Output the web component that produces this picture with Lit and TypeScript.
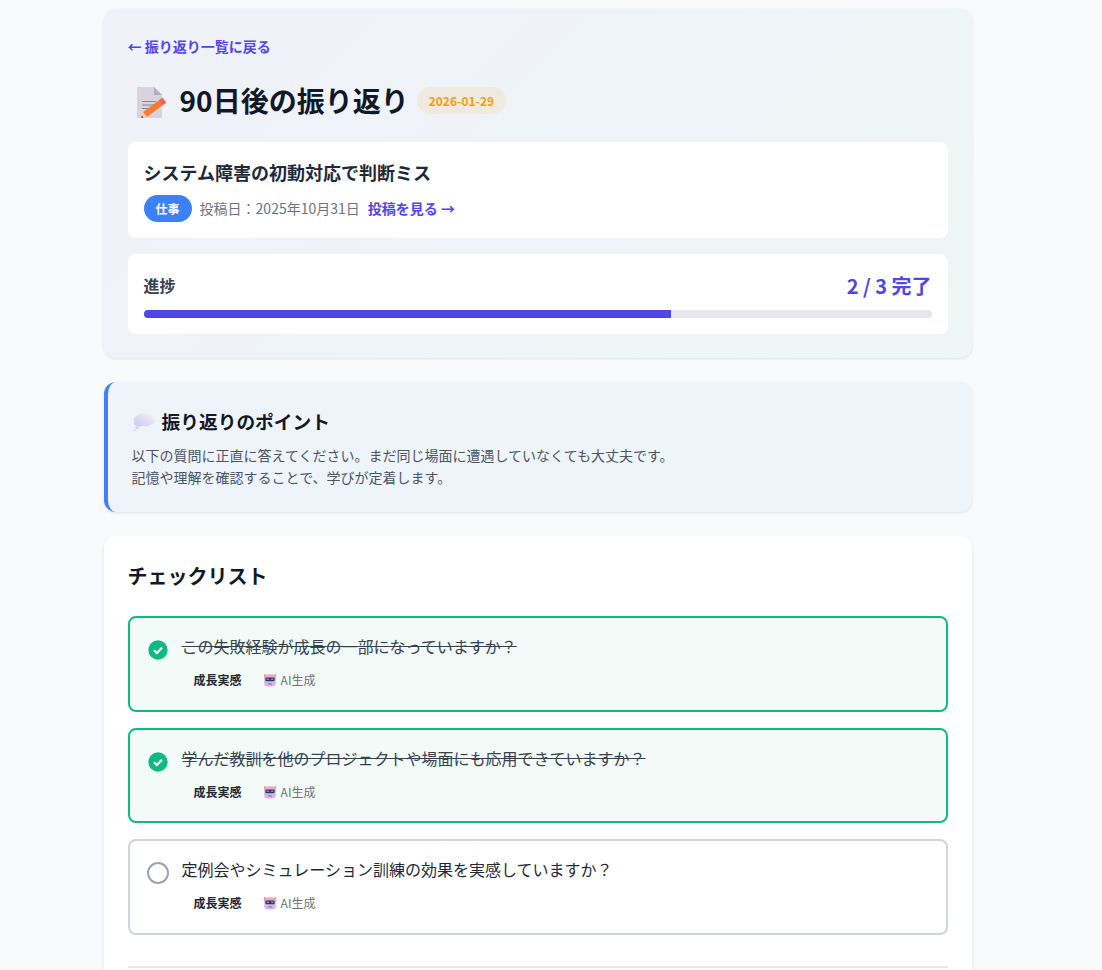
import { LitElement, html, css, svg } from "lit";
import { customElement } from "lit/decorators.js";

const items = [
  { text: "この失敗経験が成長の一部になっていますか？", done: true },
  { text: "学んだ教訓を他のプロジェクトや場面にも応用できていますか？", done: true },
  { text: "定例会やシミュレーション訓練の効果を実感していますか？", done: false },
];

const memo = svg`<svg class="memo" viewBox="0 0 32 32">
  <path d="M1 1H18L26 9V32H1Z" fill="#d9d2df"/>
  <path d="M18 1L26 9H18Z" fill="#b5aebf"/>
  <path d="M6 15.5H20M6 19H21M6 22.5H15" stroke="#8a8597" stroke-width="1.2"/>
  <path d="M9 28.5L24.5 17" stroke="#f97b2e" stroke-width="6.5"/>
  <path d="M24.5 17L28.4 14.1" stroke="#f4625c" stroke-width="6.5"/>
  <path d="M5.6 31.6L6.8 26L11 31.2Z" fill="#f6c9a0"/>
  <path d="M5 32L6 29.8L7.6 31.4Z" fill="#5b4a52"/>
</svg>`;

const cloud = svg`<svg class="cloud" viewBox="0 0 24 20">
  <defs><linearGradient id="c" x1="0" y1="1" x2="1" y2="0"><stop offset="0" stop-color="#cfc6ea"/><stop offset="1" stop-color="#f4f3fb"/></linearGradient></defs>
  <path d="M6.5 15C2.5 15 1 12 2.4 10C1 7 3.6 4.2 6.2 4.6C8 2 12 1.4 14.2 3.2C17.4 2 21 3.6 21 6.4C23.8 8 23 12.4 19.8 12.8C17.6 15.6 13.5 16 11.5 14.4C9.8 15.4 8.2 15.4 6.5 15Z" fill="url(#c)"/>
  <circle cx="5" cy="16.6" r="1.6" fill="#d8d0ee"/>
  <circle cx="2.8" cy="19" r="0.9" fill="#d8d0ee"/>
</svg>`;

const robot = svg`<svg class="robot" viewBox="0 0 14 14">
  <path d="M1 0.5L3.6 2.2H10.4L13 0.5V6H1Z" fill="#f290b8"/>
  <path d="M4 1H10V3H4Z" fill="#f8c3a8"/>
  <rect x="1.2" y="2.4" width="11.6" height="11" rx="3.4" fill="#d7b6e6"/>
  <path d="M1.2 6V4.6C1.2 3.2 2.6 2.4 4 2.4H10C11.4 2.4 12.8 3.2 12.8 4.6V6Z" fill="#f4a3c6"/>
  <rect x="2.4" y="4.4" width="9.2" height="3.8" rx="1.3" fill="#2b3a68"/>
  <rect x="3.8" y="5.6" width="2" height="1.3" fill="#63c0ee"/>
  <rect x="8.2" y="5.6" width="2" height="1.3" fill="#63c0ee"/>
  <rect x="5.2" y="10.2" width="3.6" height="1.3" rx="0.6" fill="#8a6fb0"/>
</svg>`;

@customElement("app-root")
export class AppRoot extends LitElement {
  static styles = css`
    :host {
      display: block;
      height: 970px;
      overflow: hidden;
      background: #f9fafb;
      font-family: "Noto Sans CJK JP", "Noto Sans", sans-serif;
      color: #111827;
    }
    .wrap { width: 868px; margin-left: 103.6px; padding-top: 9px; }
    .card {
      border-radius: 12px;
      box-shadow: 0 1px 3px rgba(0, 0, 0, 0.1);
      margin-bottom: 24px;
    }
    .head {
      padding: 24px;
      height: 349px;
      box-sizing: border-box;
      background: linear-gradient(135deg, rgba(79, 70, 229, 0.05) 0%, rgba(16, 185, 129, 0.05) 100%);
    }
    .back { display: block; font-size: 14px; font-weight: 700; line-height: 26px; color: #4f46e5; }
    .title { display: flex; align-items: center; gap: 8px; margin-top: 19px; height: 44px; }
    .icon-box { width: 44px; display: flex; justify-content: flex-end; padding: 4px 4px 0 0; box-sizing: border-box; }
    .memo { width: 32px; height: 32px; display: block; }
    h1 { margin: 0; font-size: 28px; line-height: 44px; font-weight: 700; }
    .date { padding: 0 12px; height: 27px; border-radius: 14px; font-size: 12px; font-weight: 700; line-height: 27px; color: #f59e0b; background: rgba(245, 158, 11, 0.1); }
    .box { background: #fff; border-radius: 8px; padding: 16px; }
    .post { margin-top: 20px; height: 96px; box-sizing: border-box; }
    .post h2 { margin: 0; font-size: 18px; line-height: 28px; font-weight: 700; color: #1f2937; }
    .meta { display: flex; align-items: center; gap: 8px; margin-top: 9px; font-size: 14px; line-height: 27px; color: #6b7280; }
    .tag { width: 48px; height: 27px; border-radius: 14px; background: #3b82f6; color: #fff; font-size: 12px; font-weight: 700; text-align: center; }
    .link { font-weight: 700; color: #4f46e5; }
    .progress { margin-top: 16px; height: 80px; box-sizing: border-box; }
    .row { display: flex; justify-content: space-between; height: 40px; }
    .row .l { font-size: 16px; font-weight: 700; line-height: 30px; color: #374151; }
    .row .r { font-size: 20px; font-weight: 700; line-height: 32px; color: #4f46e5; }
    .bar { height: 8px; border-radius: 4px; background: #e5e7eb; overflow: hidden; }
    .fill { height: 100%; background: #4f46e5; }
    .tip {
      height: 130px;
      box-sizing: border-box;
      padding: 24px;
      background: rgba(59, 130, 246, 0.05);
      border-left: 4px solid #3b82f6;
    }
    .tip h3 { margin: 0; font-size: 18.72px; line-height: 30px; font-weight: 700; display: flex; align-items: center; gap: 6px; }
    .cloud { width: 24px; height: 20px; display: block; flex: none; }
    .tip p { margin: 8px 0 0; font-size: 14px; line-height: 22.4px; color: #4b5563; }
    .check { padding: 24px; background: #fff; }
    .check h2 { margin: 0 0 24px; font-size: 20px; line-height: 32px; font-weight: 700; }
    .item { display: flex; gap: 12px; height: 95.6px; box-sizing: border-box; border: 2px solid #d1d5db; border-radius: 8px; padding: 16px; margin-bottom: 16px; background: #fff; }
    .item.done { border-color: #10b981; background: rgba(16, 185, 129, 0.05); }
    .icon { width: 24px; height: 24px; margin-top: 4px; flex: none; display: block; }
    .q { font-size: 16px; line-height: 25.6px; color: #1f2937; }
    .done .q { text-decoration: line-through; color: #374151; }
    .sub { display: flex; align-items: center; gap: 9px; font-size: 12px; line-height: 20px; margin-top: 10.4px; }
    .cat { font-weight: 700; color: #1f2937; padding: 0 12px; }
    .ai { color: #6b7280; display: flex; align-items: center; gap: 4px; }
    .robot { width: 14px; height: 14px; display: block; }
    .rule { height: 2px; background: #e5e7eb; margin-top: 31px; }
  `;

  render() {
    return html`
      <div class="wrap">
        <section class="card head">
          <a class="back">← 振り返り一覧に戻る</a>
          <div class="title">
            <span class="icon-box">${memo}</span>
            <h1>90日後の振り返り</h1>
            <span class="date">2026-01-29</span>
          </div>
          <div class="box post">
            <h2>システム障害の初動対応で判断ミス</h2>
            <div class="meta">
              <span class="tag">仕事</span>
              <span>投稿日：2025年10月31日</span>
              <span class="link">投稿を見る →</span>
            </div>
          </div>
          <div class="box progress">
            <div class="row"><span class="l">進捗</span><span class="r">2 / 3 完了</span></div>
            <div class="bar"><div class="fill" style="width:66.9%"></div></div>
          </div>
        </section>
        <section class="card tip">
          <h3>${cloud}振り返りのポイント</h3>
          <p>以下の質問に正直に答えてください。まだ同じ場面に遭遇していなくても大丈夫です。<br />記憶や理解を確認することで、学びが定着します。</p>
        </section>
        <section class="card check">
          <h2>チェックリスト</h2>
          ${items.map(
            (it) => html`
              <div class="item ${it.done ? "done" : ""}">
                ${it.done
                  ? html`<svg class="icon" viewBox="0 0 24 24"><circle cx="12" cy="12" r="9.7" fill="#10b981"/><path d="M8 12.2l2.8 2.8 5.2-5.2" fill="none" stroke="#fff" stroke-width="2.2"/></svg>`
                  : html`<svg class="icon" viewBox="0 0 24 24"><circle cx="12" cy="12" r="10" fill="none" stroke="#9ca3af" stroke-width="2"/></svg>`}
                <div>
                  <div class="q">${it.text}</div>
                  <div class="sub"><span class="cat">成長実感</span><span class="ai">${robot}AI生成</span></div>
                </div>
              </div>
            `
          )}
          <div class="rule"></div>
        </section>
      </div>
    `;
  }
}
